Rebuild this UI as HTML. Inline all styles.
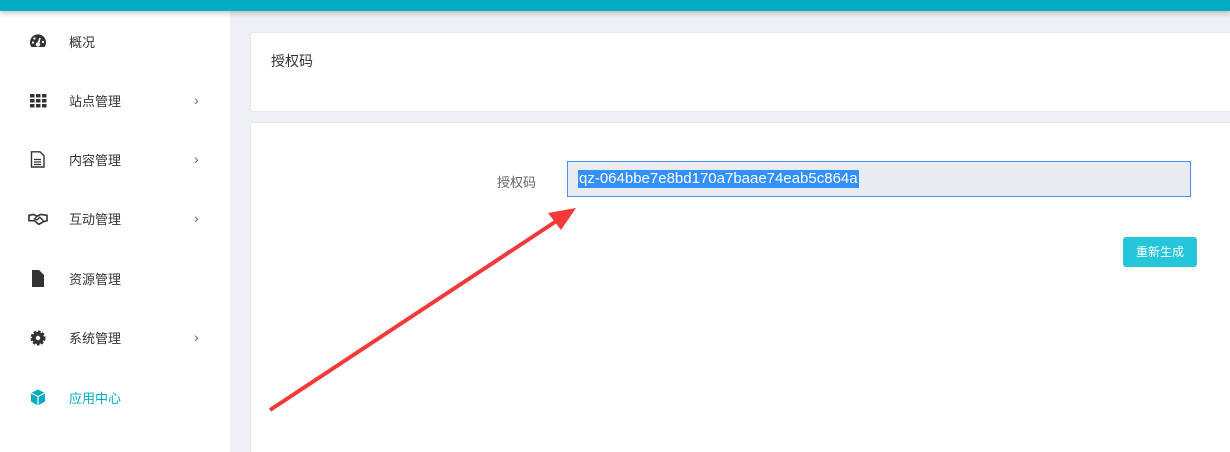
<!DOCTYPE html><html><head><meta charset="utf-8"><style>
html,body{margin:0;width:1230px;height:452px;overflow:hidden}
body{background:#eef0f4;font-family:"Liberation Sans","Noto Sans CJK SC",sans-serif;position:relative}
.top{position:absolute;left:0;top:0;width:1230px;height:11px;background:#00acc1;box-shadow:0 2px 6px rgba(0,0,0,.25);z-index:2}
.side{position:absolute;left:0;top:11px;width:230px;height:441px;background:#fff}
.item{position:absolute;left:0;width:230px;height:20px;font-size:13px;color:#333}
.item .t{position:absolute;left:69px;top:0}
.item .ic{position:absolute;left:29px;top:1px;width:18px;height:17px;overflow:visible}
.item .ar{position:absolute;left:194px;top:1px;color:#666;font-size:14px}
.card{position:absolute;left:250px;background:#fff;border:1px solid #e3e6ea;border-radius:3px}
</style></head><body>
<div class="top"></div>
<div class="side">
<div class="item" style="top:21px"><svg class="ic" viewBox="0 0 18 17"><path d="M2.5 14 A8 8 0 1 1 15.5 14 Z" fill="#333"/><circle cx="9" cy="11.5" r="2.2" fill="#fff"/><path d="M9 11.5 L11 5" stroke="#fff" stroke-width="1.6"/><circle cx="4" cy="9.5" r="1.1" fill="#fff"/><circle cx="5.5" cy="5.5" r="1.1" fill="#fff"/><circle cx="14" cy="9" r="1.1" fill="#fff"/></svg><span class="t">概况</span></div>
<div class="item" style="top:80px"><svg class="ic" viewBox="0 0 18 17"><g fill="#333"><rect x="1" y="2" width="4.5" height="3.5"/><rect x="7" y="2" width="4.5" height="3.5"/><rect x="13" y="2" width="4.5" height="3.5"/><rect x="1" y="7" width="4.5" height="3.5"/><rect x="7" y="7" width="4.5" height="3.5"/><rect x="13" y="7" width="4.5" height="3.5"/><rect x="1" y="12" width="4.5" height="3.5"/><rect x="7" y="12" width="4.5" height="3.5"/><rect x="13" y="12" width="4.5" height="3.5"/></g></svg><span class="t">站点管理</span><span class="ar">›</span></div>
<div class="item" style="top:139px"><svg class="ic" viewBox="0 0 18 17"><path d="M2.5 0.8 H11 L15 4.8 V16 H2.5 Z" fill="none" stroke="#333" stroke-width="1.4"/><path d="M5 8.5h7M5 11h7M5 13.5h7" stroke="#333" stroke-width="1.2"/></svg><span class="t">内容管理</span><span class="ar">›</span></div>
<div class="item" style="top:198px"><svg class="ic" viewBox="0 0 20 17"><path d="M0 5 L5 4 L9 6 L13 4 L20 5 V11 L16 12 L11 15 L6 11 L0 11Z" fill="none" stroke="#333" stroke-width="1.8"/><path d="M9 6 L6 9 L9 10 L12 7 L16 11" fill="none" stroke="#333" stroke-width="1.5"/></svg><span class="t">互动管理</span><span class="ar">›</span></div>
<div class="item" style="top:258px"><svg class="ic" viewBox="0 0 18 17"><path d="M3 0 H10 L15 5 V17 H3Z" fill="#333"/></svg><span class="t">资源管理</span></div>
<div class="item" style="top:317px"><svg class="ic" viewBox="0 0 18 17"><circle cx="9" cy="9" r="6" fill="#333" stroke="#333" stroke-width="3" stroke-dasharray="2.5 1.5"/><circle cx="9" cy="9" r="2.2" fill="#fff"/></svg><span class="t">系统管理</span><span class="ar">›</span></div>
<div class="item" style="top:377px;color:#00acc1"><svg class="ic" viewBox="0 0 18 17"><path d="M9 0.5 L16 4 V12.5 L9 16.5 L2 12.5 V4Z" fill="#00acc1"/><path d="M2 4 L9 7.5 L16 4 M9 7.5 V16.5" stroke="#fff" stroke-width="1.2" fill="none"/></svg><span class="t">应用中心</span></div>
</div>
<div class="card" style="top:32px;width:990px;height:78px"><div style="position:absolute;left:20px;top:18px;font-size:14px;color:#333">授权码</div></div>
<div class="card" style="top:122px;width:990px;height:340px">
<div style="position:absolute;left:246px;top:49px;font-size:13px;color:#666">授权码</div>
<div style="position:absolute;left:316px;top:38px;width:622px;height:34px;background:#e8ebef;border:1px solid #4a8ef0"><span style="position:absolute;left:10px;top:8px;background:#3390ff;color:#fff;font-size:15px;line-height:18px;padding:0 1px">qz-064bbe7e8bd170a7baae74eab5c864a</span></div>
<div style="position:absolute;left:872px;top:114px;width:74px;height:30px;background:#26c6da;border-radius:3px;color:#fff;font-size:12px;text-align:center;line-height:30px">重新生成</div>
</div>
<svg style="position:absolute;left:0;top:0" width="1230" height="452"><line x1="270" y1="410" x2="558" y2="220" stroke="#f23a3a" stroke-width="4"/><path d="M576 208 L548 213 L561 230 Z" fill="#f23a3a"/></svg>
</body></html>
